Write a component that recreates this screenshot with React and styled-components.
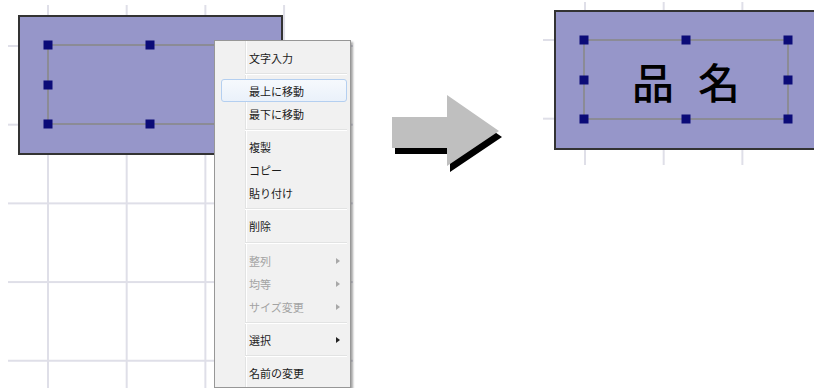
import styled, { createGlobalStyle } from "styled-components";

const GlobalStyle = createGlobalStyle`
  html, body { margin: 0; padding: 0; background: #fff; }
  body { font-family: "Noto Sans CJK JP", "Noto Sans", sans-serif; }
`;

const Page = styled.div`
  width: 814px;
  height: 388px;
  overflow: hidden;
  display: flex;
  align-items: flex-start;
  background: #fff;
`;

const gridLines = (x, y) => `
  background-image:
    linear-gradient(to right, #dfdfe8 0 2px, transparent 2px),
    linear-gradient(to bottom, #dfdfe8 0 2px, transparent 2px);
  background-size: 78.7px 78.7px;
  background-position: ${x}px ${y}px;
`;

const LeftCanvas = styled.div`
  position: relative;
  flex: none;
  margin: 5px 0 0 8px;
  width: 345px;
  height: 383px;
  ${gridLines(39, 40)}
`;

const RightCanvas = styled.div`
  position: relative;
  flex: 1;
  margin: 2px 0 0 33px;
  height: 163px;
  ${gridLines(41, 37)}
`;

// a shape sitting on the canvas
const Shape = styled.div`
  position: absolute;
  left: ${(p) => p.x}px;
  top: ${(p) => p.y}px;
  width: ${(p) => p.w}px;
  height: 140px;
  box-sizing: border-box;
  border: 2px solid #333;
  background: #9696c9;
`;

const Frame = styled.div`
  position: absolute;
  left: 27px;
  top: 27px;
  width: 206px;
  height: 81px;
  box-sizing: border-box;
  border: 2px solid #8b8b96;
  display: flex;
  align-items: center;
  justify-content: center;
  gap: 24px;
`;

const Handle = styled.div`
  position: absolute;
  width: 9px;
  height: 9px;
  background: #0b0b78;
  left: calc(${(p) => p.fx} * (100% + 2px) - 1px);
  top: calc(${(p) => p.fy} * (100% + 2px) - 1px);
  transform: translate(-50%, -50%);
`;

const Glyph = styled.span`
  font-size: 42px;
  font-weight: 500;
  line-height: 1;
  color: #000;
  margin-top: 3px;
`;

const Menu = styled.div`
  position: absolute;
  left: 206px;
  top: 35px;
  width: 137px;
  box-sizing: border-box;
  padding: 5px 3px 3px 6px;
  border: 1px solid #979797;
  box-shadow: 2px 2px 2px rgba(0, 0, 0, 0.35);
  background: linear-gradient(
    to right,
    #f1f1f1 30px,
    #e2e3e3 30px,
    #e2e3e3 31px,
    #fff 31px,
    #fff 32px,
    #f1f1f1 32px
  );
`;

const Item = styled.div`
  height: 23px;
  box-sizing: border-box;
  display: flex;
  align-items: center;
  padding: 0 6px 0 27px;
  border: 1px solid ${(p) => (p.active ? "#b4cff0" : "transparent")};
  border-radius: 3px;
  background: ${(p) =>
    p.active ? "linear-gradient(#f6f9fd, #eaf1fa)" : "transparent"};
  font-size: 11px;
  color: ${(p) => (p.disabled ? "#a3a3a3" : "#1b1b1b")};
  white-space: nowrap;
`;

const SubArrow = styled.span`
  margin-left: auto;
  width: 0;
  height: 0;
  border-left: 4px solid ${(p) => (p.disabled ? "#a8a8a8" : "#222")};
  border-top: 3.5px solid transparent;
  border-bottom: 3.5px solid transparent;
`;

const Separator = styled.div`
  height: 1px;
  margin: ${(p) => (p.tall ? "5px 0 5px 24px" : "4px 0 4px 24px")};
  background: #e2e3e3;
  border-bottom: 1px solid #fff;
`;

const ArrowSvg = styled.svg`
  flex: none;
  margin: 90px 0 0 32px;
`;

const items = [
  { label: "文字入力" },
  "-",
  { label: "最上に移動", active: true },
  { label: "最下に移動" },
  "-",
  { label: "複製" },
  { label: "コピー" },
  { label: "貼り付け" },
  "-",
  { label: "削除" },
  "=",
  { label: "整列", disabled: true, sub: true },
  { label: "均等", disabled: true, sub: true },
  { label: "サイズ変更", disabled: true, sub: true },
  "-",
  { label: "選択", sub: true },
  "-",
  { label: "名前の変更" },
];

const handles = [
  [0, 0], [0.5, 0], [1, 0],
  [0, 0.5], [1, 0.5],
  [0, 1], [0.5, 1], [1, 1],
];

const Selection = ({ children }) => (
  <Frame>
    {children}
    {handles.map(([fx, fy]) => (
      <Handle key={`${fx}-${fy}`} fx={fx} fy={fy} />
    ))}
  </Frame>
);

export default function App() {
  return (
    <>
      <GlobalStyle />
      <Page>
        <LeftCanvas>
          <Shape x={10} y={10} w={265}>
            <Selection />
          </Shape>
          <Menu>
            {items.map((it, i) =>
              typeof it === "string" ? (
                <Separator key={i} tall={it === "="} />
              ) : (
                <Item key={i} active={it.active} disabled={it.disabled}>
                  {it.label}
                  {it.sub && <SubArrow disabled={it.disabled} />}
                </Item>
              )
            )}
          </Menu>
        </LeftCanvas>

        <ArrowSvg width="125" height="85" viewBox="0 0 125 85">
          <polygon
            points="10,33 65,33 65,11 117,47 65,82 65,64 10,64"
            fill="#000"
          />
          <polygon
            points="7,27 62,27 62,5 114,41 62,76 62,58 7,58"
            fill="#bfbfbf"
          />
        </ArrowSvg>

        <RightCanvas>
          <Shape x={11} y={8} w={275}>
            <Selection>
              <Glyph>品</Glyph>
              <Glyph>名</Glyph>
            </Selection>
          </Shape>
        </RightCanvas>
      </Page>
    </>
  );
}
